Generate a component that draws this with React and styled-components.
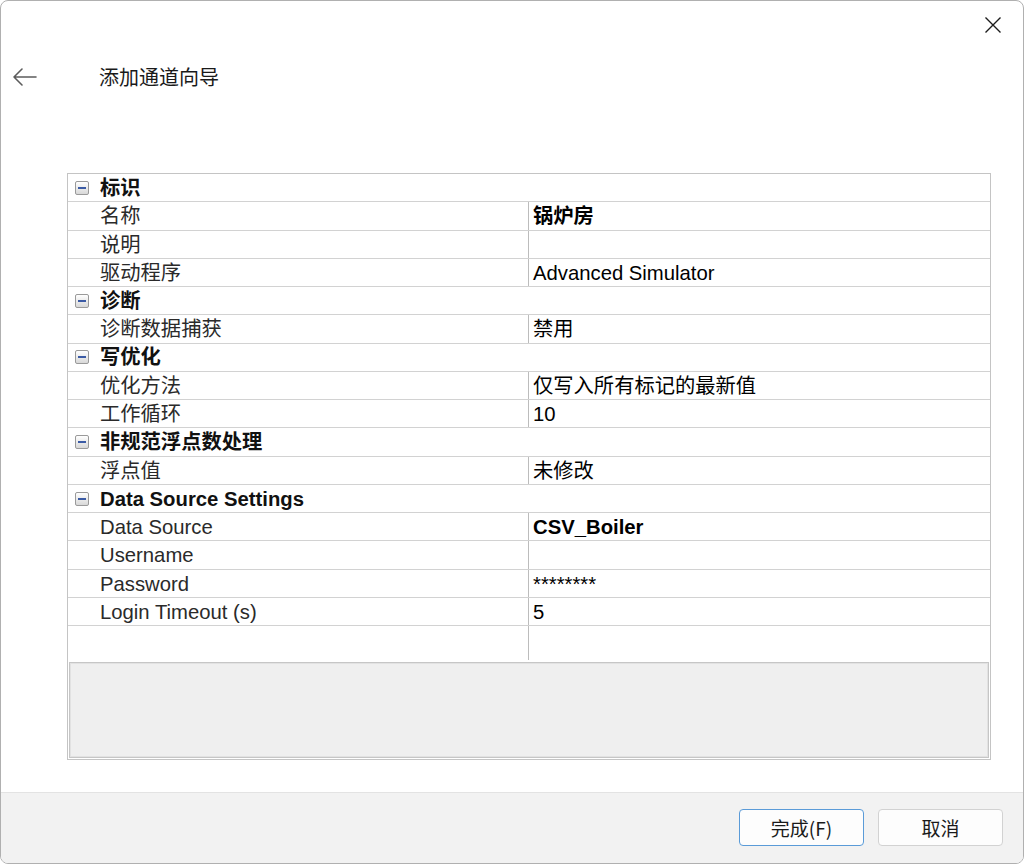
import React from 'react'
import styled, { createGlobalStyle } from 'styled-components'

const GlobalStyle = createGlobalStyle`
  html, body {
    margin: 0;
    padding: 0;
    background: #ffffff;
  }
  * {
    box-sizing: border-box;
  }
`

const sections = [
  {
    title: '标识',
    rows: [
      { label: '名称', value: '锅炉房', bold: true },
      { label: '说明', value: '' },
      { label: '驱动程序', value: 'Advanced Simulator' },
    ],
  },
  {
    title: '诊断',
    rows: [{ label: '诊断数据捕获', value: '禁用' }],
  },
  {
    title: '写优化',
    rows: [
      { label: '优化方法', value: '仅写入所有标记的最新值' },
      { label: '工作循环', value: '10' },
    ],
  },
  {
    title: '非规范浮点数处理',
    rows: [{ label: '浮点值', value: '未修改' }],
  },
  {
    title: 'Data Source Settings',
    rows: [
      { label: 'Data Source', value: 'CSV_Boiler', bold: true },
      { label: 'Username', value: '' },
      { label: 'Password', value: '********' },
      { label: 'Login Timeout (s)', value: '5' },
    ],
  },
]

const BackArrow = () => (
  <svg width="26" height="20" viewBox="0 0 26 20" fill="none">
    <path
      d="M2 10 H24 M10 2 L2 10 L10 18"
      stroke="#5c5c5c"
      strokeWidth="1.6"
      strokeLinecap="round"
      strokeLinejoin="round"
    />
  </svg>
)

const CloseIcon = () => (
  <svg width="18" height="18" viewBox="0 0 18 18" fill="none">
    <path d="M1.5 1.5 L16.5 16.5 M16.5 1.5 L1.5 16.5" stroke="#1c1c1c" strokeWidth="1.4" />
  </svg>
)

const App = () => (
  <>
    <GlobalStyle />
    <Window>
      <Header>
        <BackButton>
          <BackArrow />
        </BackButton>
        <Title>添加通道向导</Title>
        <CloseButton>
          <CloseIcon />
        </CloseButton>
      </Header>
      <Content>
        <PropertyGrid>
          {sections.map((section) => (
            <React.Fragment key={section.title}>
              <CategoryRow>
                <ExpandBox>
                  <Minus />
                </ExpandBox>
                <CategoryLabel>{section.title}</CategoryLabel>
              </CategoryRow>
              {section.rows.map((row) => (
                <Row key={row.label}>
                  <LabelCell>{row.label}</LabelCell>
                  <ValueCell bold={row.bold}>{row.value}</ValueCell>
                </Row>
              ))}
            </React.Fragment>
          ))}
          <FillerRow>
            <LabelCell />
            <ValueCell />
          </FillerRow>
          <DescriptionPanel />
        </PropertyGrid>
      </Content>
      <Footer>
        <Button primary>完成(F)</Button>
        <Button>取消</Button>
      </Footer>
    </Window>
  </>
)

const Window = styled.div`
  position: relative;
  width: 1024px;
  height: 864px;
  display: flex;
  flex-direction: column;
  border: 1px solid #b0b0b0;
  border-radius: 8px;
  overflow: hidden;
  background: #ffffff;
  font-family: 'Liberation Sans', 'Noto Sans CJK SC', sans-serif;
`

const Header = styled.div`
  height: 124px;
  display: flex;
  align-items: flex-start;
  padding: 56px 0 0 11px;
`

const BackButton = styled.div`
  width: 40px;
  height: 40px;
  display: flex;
  align-items: center;
  justify-content: flex-start;
`

const Title = styled.div`
  height: 40px;
  line-height: 40px;
  margin-left: 47px;
  font-family: 'Noto Sans CJK SC', sans-serif;
  font-size: 20px;
  color: #1a1a1a;
`

const CloseButton = styled.div`
  position: absolute;
  top: 15px;
  right: 21px;
  width: 18px;
  height: 18px;
  display: flex;
`

const Content = styled.div`
  padding: 48px 0 0 66px;
`

const PropertyGrid = styled.div`
  width: 924px;
  border: 1px solid #c4c4c4;
  display: flex;
  flex-direction: column;
  background: #ffffff;
`

const BaseRow = styled.div`
  display: flex;
  flex: none;
  height: 28.27px;
  border-bottom: 1px solid #d2d2d2;
  font-size: 20.3px;
  line-height: 28px;
`

const CategoryRow = styled(BaseRow)`
  align-items: center;
`

const Row = styled(BaseRow)``

const FillerRow = styled(BaseRow)`
  height: 34px;
  border-bottom: none;
`

const ExpandBox = styled.div`
  width: 14px;
  height: 14px;
  margin-left: 7px;
  border: 1px solid #9a9a9a;
  border-radius: 2px;
  background: linear-gradient(#ffffff, #d8d8d8);
  display: flex;
  align-items: center;
  justify-content: center;
`

const Minus = styled.div`
  width: 8px;
  height: 2px;
  background: #3b5ba5;
`

const CategoryLabel = styled.div`
  margin-left: 11px;
  font-weight: bold;
  color: #111111;
`

const LabelCell = styled.div`
  width: 460px;
  flex: none;
  padding-left: 32px;
  color: #2a2a2a;
  white-space: nowrap;
`

const ValueCell = styled.div`
  flex: 1;
  border-left: 1px solid #bcbcbc;
  padding-left: 4px;
  color: #000000;
  font-weight: ${(p) => (p.bold ? 'bold' : 'normal')};
  white-space: nowrap;
`

const DescriptionPanel = styled.div`
  height: 96px;
  margin: 2px 1px 1px 1px;
  border: 1px solid #c6c6c6;
  box-shadow: inset 0 0 0 1px #e2e2e2;
  background: #efefef;
`

const Footer = styled.div`
  margin-top: auto;
  height: 71px;
  border-top: 1px solid #e3e3e3;
  background: #f2f2f2;
  display: flex;
  justify-content: flex-end;
  align-items: flex-start;
  gap: 14px;
  padding: 16px 20px 0 0;
`

const Button = styled.div`
  width: 125px;
  height: 37px;
  border: 1px solid ${(p) => (p.primary ? '#5a9bd8' : '#d2d2d2')};
  border-radius: 4px;
  background: #fdfdfd;
  display: flex;
  align-items: center;
  justify-content: center;
  font-family: 'Noto Sans CJK SC', sans-serif;
  font-size: 19px;
  color: #1a1a1a;
`

export default App
